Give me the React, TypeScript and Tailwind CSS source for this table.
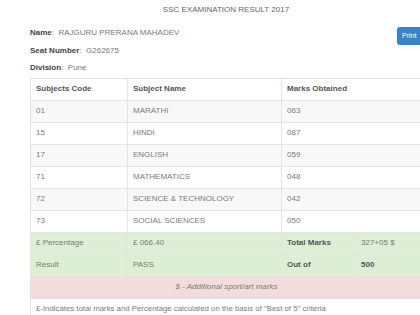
import React from 'react'

const subjects = [
  { code: '01', name: 'MARATHI', marks: '063' },
  { code: '15', name: 'HINDI', marks: '087' },
  { code: '17', name: 'ENGLISH', marks: '059' },
  { code: '71', name: 'MATHEMATICS', marks: '048' },
  { code: '72', name: 'SCIENCE & TECHNOLOGY', marks: '042' },
  { code: '73', name: 'SOCIAL SCIENCES', marks: '050' },
]

const cell = 'border border-[#e3e3e3] px-[5px] h-[22px] align-middle'

export default function App() {
  return (
    <div className="w-[420px] h-[315px] overflow-hidden bg-white text-[8px] text-[#7a7a7a] font-['Liberation_Sans',Arial,sans-serif]">
      <div className="w-[440px]">
        {/* Title */}
        <div className="pt-[4px] pl-[32px] w-[420px] text-center leading-[11px] text-[#666]">
          SSC EXAMINATION RESULT 2017
        </div>

        {/* Student info + print */}
        <div className="flex items-start pl-[30px] pt-[9px]">
          <div className="flex-1 leading-[17.5px]">
            <div>
              <span className="font-bold text-[#444]">Name</span>: &nbsp;RAJGURU PRERANA MAHADEV
            </div>
            <div>
              <span className="font-bold text-[#444]">Seat Number</span>: &nbsp;G262675
            </div>
            <div>
              <span className="font-bold text-[#444]">Division</span>: &nbsp;Pune
            </div>
          </div>
          <button className="mt-[3px] w-[43px] h-[18px] rounded-[3px] bg-[#3a84c6] text-white text-[7px] text-left pl-[5px]">
            Print
          </button>
        </div>

        {/* Result table */}
        <table className="ml-[30px] mt-[1px] w-[392px] table-fixed border-collapse">
          <colgroup>
            <col className="w-[97px]" />
            <col className="w-[154px]" />
            <col className="w-[74px]" />
            <col className="w-[67px]" />
          </colgroup>
          <thead>
            <tr className="text-left font-bold text-[#555]">
              <th className={cell}>Subjects Code</th>
              <th className={cell}>Subject Name</th>
              <th className={cell} colSpan={2}>Marks Obtained</th>
            </tr>
          </thead>
          <tbody>
            {subjects.map((s, i) => (
              <tr key={s.code} className={i % 2 === 0 ? 'bg-[#f8f8f8]' : 'bg-white'}>
                <td className={cell}>{s.code}</td>
                <td className={cell}>{s.name}</td>
                <td className={cell} colSpan={2}>{s.marks}</td>
              </tr>
            ))}
            <tr className="bg-[#dcefd4]">
              <td className={cell}>£ Percentage</td>
              <td className={cell}>£ 066.40</td>
              <td className={`${cell} font-bold text-[#555]`}>Total Marks</td>
              <td className={cell}>327+05 $</td>
            </tr>
            <tr className="bg-[#dcefd4]">
              <td className={cell}>Result</td>
              <td className={cell}>PASS</td>
              <td className={`${cell} font-bold text-[#555]`}>Out of</td>
              <td className={`${cell} font-bold text-[#555]`}>500</td>
            </tr>
            <tr className="bg-[#f3dcdc]">
              <td className={`${cell} text-center italic`} colSpan={4}>
                $ - Additional sport/art marks
              </td>
            </tr>
            <tr>
              <td className={`${cell} border-b-0 text-[7.8px]`} colSpan={4}>
                £-Indicates total marks and Percentage calculated on the basis of "Best of 5" criteria
              </td>
            </tr>
          </tbody>
        </table>
      </div>
    </div>
  )
}
